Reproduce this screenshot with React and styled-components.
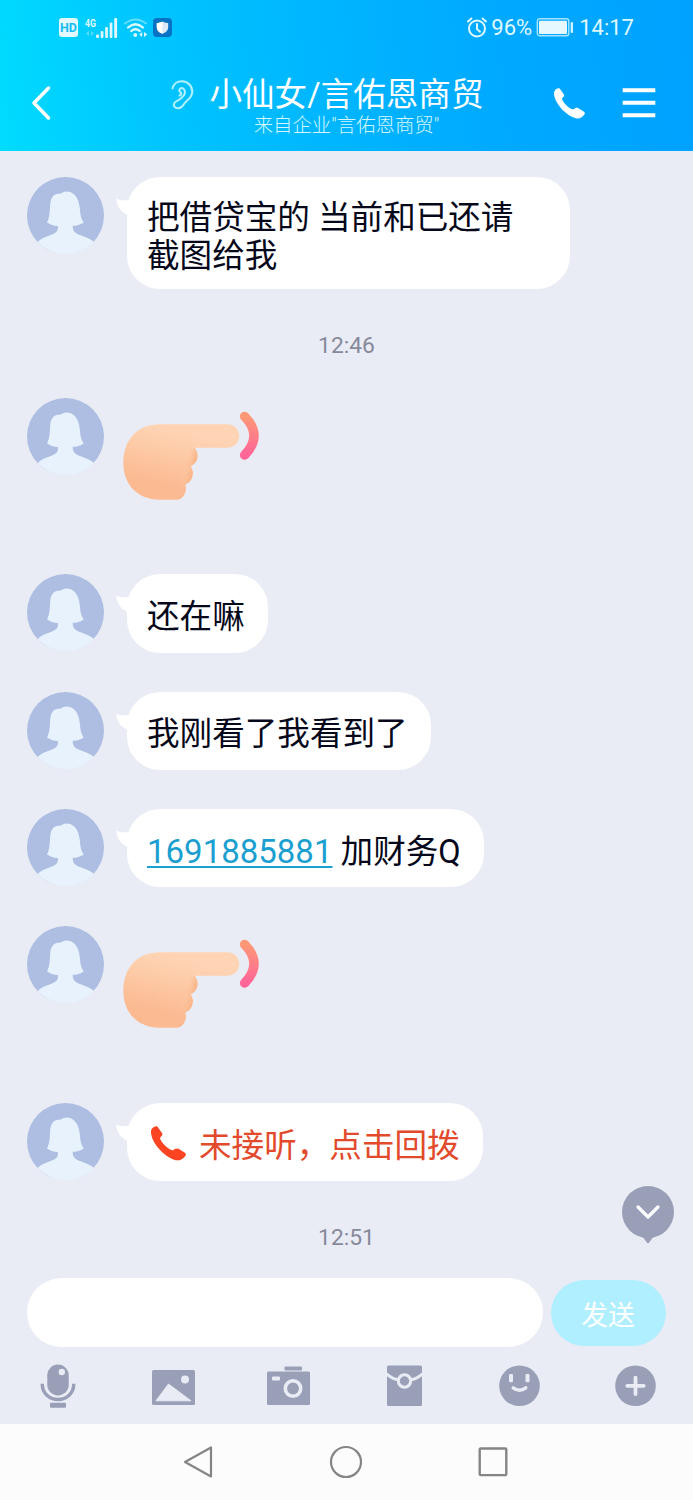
import React from "react";
import styled, { createGlobalStyle } from "styled-components";

const GlobalStyle = createGlobalStyle`
  * { box-sizing: border-box; }
  body {
    margin: 0;
    background: #e9ecf5;
    font-family: Roboto, "Noto Sans CJK SC", sans-serif;
  }
  svg { display: block; flex: none; }
`;

const Screen = styled.div`
  width: 693px;
  height: 1500px;
  display: flex;
  flex-direction: column;
  overflow: hidden;
  background: #e9ecf5;
`;

const Header = styled.header`
  height: 151px;
  flex: none;
  color: #fff;
  background: linear-gradient(84deg, #00dcff 0%, #00d4ff 7%, #00c4ff 24%, #00b5ff 48%, #00a8ff 75%, #00a2ff 100%);
`;

const StatusBar = styled.div`
  height: 55px;
  padding: 0 59px;
  display: flex;
  align-items: center;
  justify-content: space-between;
  color: #dff8ff;
`;

const StatusGroup = styled.div`
  display: flex;
  align-items: center;
  gap: ${(p) => p.$gap}px;
`;

const HdBadge = styled.span`
  width: 19px;
  height: 19px;
  margin-right: 1px;
  border-radius: 3px;
  background: #e2f9ff;
  color: #12bdf3;
  font-size: 12.5px;
  font-weight: 700;
  line-height: 19px;
  text-align: center;
`;

const StatusText = styled.span`
  font-size: 22px;
  line-height: 26px;
  margin-left: ${(p) => p.$left || 0}px;
`;

const TitleBar = styled.div`
  height: 96px;
  padding: 0 37px 0 31px;
  display: grid;
  grid-template-columns: 100px 1fr 102px;
  align-items: center;
`;

const TitleBlock = styled.div`
  display: flex;
  flex-direction: column;
  align-items: center;
  padding-top: 7px;
`;

const Title = styled.h1`
  margin: 0 30px 0 0;
  display: flex;
  align-items: center;
  gap: 15px;
  font-size: 32.6px;
  font-weight: 400;
  line-height: 38px;
  white-space: nowrap;
`;

const Subtitle = styled.div`
  margin-left: 8px;
  font-size: 19.4px;
  font-weight: 300;
  line-height: 24px;
  white-space: nowrap;
  color: #d5f6ff;
`;

const HeaderActions = styled.div`
  display: flex;
  align-items: center;
  justify-content: space-between;
`;

const Conversation = styled.main`
  position: relative;
  height: 1116px;
  flex: none;
  padding: 26px 27px 0;
  display: flex;
  flex-direction: column;
  gap: 39px;
`;

const MessageRow = styled.div`
  display: flex;
  align-items: flex-start;
  flex: none;
  gap: ${(p) => (p.$sticker ? 16 : 23)}px;
  height: ${(p) => (p.$sticker ? "137.8px" : "auto")};
`;

const Bubble = styled.div`
  position: relative;
  min-height: 78.3px;
  width: ${(p) => (p.$width ? `${p.$width}px` : "auto")};
  padding: ${(p) => (p.$multiline ? "22px 40px 14px 20px" : "23.3px 23px 16.7px 20px")};
  display: flex;
  align-items: center;
  border-radius: 33px;
  background: #fff;
  color: ${(p) => (p.$alert ? "#e24a2b" : "#05081a")};
  font-size: 32.6px;
  line-height: 38px;
`;

const MissedIcon = styled.span`
  margin: -5px 13px 0 4px;
`;

const Tail = styled.svg`
  position: absolute;
  left: -11.5px;
  top: 21px;
`;

const QqLink = styled.span`
  color: #1a9fd0;
  font-size: 33px;
  text-decoration: underline;
  text-decoration-thickness: 2px;
  text-underline-offset: 3px;
`;

const TimeStamp = styled.time`
  height: 30.7px;
  flex: none;
  padding-top: 2.5px;
  font-size: 22.8px;
  line-height: 29px;
  text-align: center;
  color: #86899a;
`;

const JumpDown = styled.div`
  position: absolute;
  right: 19px;
  top: 1035px;
`;

const Composer = styled.div`
  height: 80px;
  flex: none;
  padding: 11px 27px 0;
  display: flex;
  align-items: flex-start;
  gap: 8px;
`;

const InputField = styled.div`
  width: 516px;
  height: 69px;
  border-radius: 35px;
  background: #fff;
`;

const SendButton = styled.button`
  width: 115px;
  height: 66px;
  margin: 2px 0 0;
  padding: 0 1px 0 0;
  border: 0;
  border-radius: 33px;
  background: #b0efff;
  color: #fff;
  font-family: inherit;
  font-size: 26.8px;
`;

const ToolRow = styled.div`
  height: 77px;
  flex: none;
  display: grid;
  grid-template-columns: repeat(6, 1fr);
  justify-items: center;
  align-items: center;
`;

const NavBar = styled.nav`
  height: 76px;
  flex: none;
  padding-right: 1px;
  display: flex;
  justify-content: center;
  align-items: center;
  gap: 113px;
  background: #fcfcfc;
`;

const Handset = ({ size, color }) => (
  <svg width={size} height={size} viewBox="0 0 32 32">
    <path
      fill={color}
      d="M0 5.5C0 2.5 2 .6 4.6 .2C5.8 .1 6.3 .8 6.8 1.8L10.3 6.8C10.8 7.8 10.2 8.8 9.5 9.4C8.6 10.2 8 11 8.5 12C10 15.5 15 20.5 19 22C20.2 22.5 20.8 21.8 21.6 21C22.6 20.2 24 20.4 25.2 20.9L31 24.5C32.2 25.4 32 26.6 31.2 27.6C29 30.6 25.8 32 22.5 31.2C12 28.5 0 15 0 5.5Z"
    />
  </svg>
);

const Signal = () => (
  <svg width="33" height="22" viewBox="0 0 33 22" fill="#dff8ff">
    <text x="0" y="9.5" fontSize="11.5" fontWeight="700" textLength="11" lengthAdjust="spacingAndGlyphs">4G</text>
    <path d="M4 14v5L1 16.5zM6 14v5l3-2.5z" opacity=".4" />
    <rect x="11" y="17.5" width="3" height="3.5" rx="1" />
    <rect x="15.7" y="14" width="2.7" height="7" rx="1" />
    <rect x="20.2" y="10" width="2.7" height="11" rx="1" />
    <rect x="24.7" y="5.5" width="2.7" height="15.5" rx="1" />
    <rect x="29.2" y="1" width="2.9" height="20" rx="1" />
  </svg>
);

const Wifi = () => (
  <svg width="24" height="20" viewBox="0 0 24 20" fill="none" stroke="#dff8ff" strokeWidth="2" strokeLinecap="round">
    <path d="M1 5.5Q11.5 -2.5 22 5.5" opacity=".45" />
    <path d="M4 9.5Q11.5 3 19 9.5M7.3 13Q11.5 9.4 15.7 13" strokeWidth="2.3" />
    <circle cx="11.3" cy="17" r="1.9" fill="#dff8ff" stroke="none" />
    <path d="M18.2 14v5l-3-2.5zM20 14v5l3.3-2.5z" fill="#dff8ff" stroke="none" />
  </svg>
);

const ShieldBadge = () => (
  <svg width="19" height="19" viewBox="0 0 19 19">
    <rect width="19" height="19" rx="4" fill="#0873c4" />
    <path d="M9.5 3.5C11.5 4.6 13 4.9 15.2 5V9.5C15.2 12.5 13 14.5 9.5 15.8C6 14.5 3.8 12.5 3.8 9.5V5C6 4.9 7.5 4.6 9.5 3.5Z" fill="#d9e9f5" />
    <path d="M9.5 3.5V15.8C6 14.5 3.8 12.5 3.8 9.5V5C6 4.9 7.5 4.6 9.5 3.5Z" fill="#fff" />
  </svg>
);

const Alarm = () => (
  <svg width="20" height="21" viewBox="0 0 20 21" fill="none" stroke="#dff8ff" strokeWidth="2" strokeLinecap="round">
    <circle cx="10" cy="11.5" r="8" />
    <path d="M10 7v5l3 2.7M1 4.4L4.4 1.5M19 4.4L15.6 1.5" />
  </svg>
);

const Battery = () => (
  <svg width="38" height="19" viewBox="0 0 38 19">
    <rect x="1.3" y=".8" width="31.5" height="17" rx="2.5" fill="none" stroke="#a5e5ff" strokeWidth="1.4" />
    <rect x="3" y="2.7" width="28" height="13.3" rx="1" fill="#e6f8ff" />
    <rect x="34.7" y="4" width="2.3" height="11" rx="1" fill="#d2f3ff" />
  </svg>
);

const Ear = () => (
  <svg width="23" height="30" viewBox="0 0 23 30" fill="none" stroke="#b4f1ff" strokeWidth="2" strokeLinecap="round">
    <path d="M1.5 8.5C2.5 4 6.5 1.2 11 1.3C17 1.4 21.5 6 21.3 12C21.1 17.4 16.5 19.8 14.3 22.3C12 25 11.5 28.3 7.3 28.3C3.6 28.3 2 25.7 3.2 23.2C4.5 20.5 8.5 20.4 10.8 17.7" />
    <path d="M8.3 10.4C8.2 8 11 7.4 12.6 8.9C14.8 11.2 14.3 15.4 10.7 17.5M8.3 10.4C8.3 12 10.3 11.7 10.3 13.5C10.3 14.8 9.3 15.2 8.6 15.5" />
  </svg>
);

const Avatar = () => (
  <svg width="77" height="77" viewBox="0 0 77 77">
    <circle cx="38.5" cy="38.5" r="38.5" fill="#adbee2" />
    <path
      fill="#e8f2fd"
      d="M10.5 65C14 61.5 20 59.5 25 57.6C29 56 31 54 31 50.8L30.7 49C26.5 48.6 23 47.4 20 45.4C23 40 22.8 33 23.2 27C23.7 20 27.5 16.2 32 16.7C33.5 16.9 34.3 16.4 35.4 15.6C39 13.8 43 14.4 46 16.5C51 20 52.5 27 53 33C53.3 38 54.2 42 56.7 45.4C53.5 47.5 49.5 48.8 45.8 48.8C45.3 53 47.6 55.8 51.5 57.4C57 59.5 63.5 61.5 67 65A38.5 38.5 0 0 1 10.5 65Z"
    />
  </svg>
);

const PokeSticker = ({ id }) => (
  <svg width="145" height="110" viewBox="0 0 145 110">
    <defs>
      <linearGradient id={`${id}-skin`} x1=".6" y1="0" x2=".25" y2="1">
        <stop offset=".12" stopColor="#fed4b5" />
        <stop offset=".4" stopColor="#fdcaa6" />
        <stop offset=".8" stopColor="#fbba91" />
      </linearGradient>
      <linearGradient id={`${id}-knuckle`} x1="0" y1="0" x2="1" y2=".3">
        <stop offset=".5" stopColor="#fdc8a4" stopOpacity="0" />
        <stop offset="1" stopColor="#fab68a" />
      </linearGradient>
      <linearGradient id={`${id}-arc`} x1="0" y1="0" x2="0" y2="1">
        <stop offset="0" stopColor="#ff9876" />
        <stop offset="1" stopColor="#ff6597" />
      </linearGradient>
    </defs>
    <path
      fill={`url(#${id}-skin)`}
      d="M40 26.2H107.5A11.8 11.8 0 0 1 107.5 49.8H74.500C79.500 55 78.300 65.500 70.500 68.200C74.500 73.500 73.300 83.500 65.300 86.400C67.500 92.500 64 101.700 56.500 101.700H40C17 101.700 3.300 86 3.300 65C3.300 42 17 26.200 40 26.200Z"
    />
    <path fill={`url(#${id}-knuckle)`} d="M58 49.800H74.500C79.500 55 78.300 65.500 70.500 68.200C65 68 60 62 58 49.800Z" />
    <path fill={`url(#${id}-knuckle)`} d="M54 68H70.500C74.500 73.500 73.300 83.500 65.300 86.400C60 85 56 78 54 68Z" />
    <path d="M124.700 18.500Q143.200 37.500 124.700 57" fill="none" stroke={`url(#${id}-arc)`} strokeWidth="9.600" strokeLinecap="round" />
  </svg>
);

const TextMessage = ({ children, ...bubble }) => (
  <MessageRow>
    <Avatar />
    <Bubble {...bubble}>
      <Tail width="22" height="18" viewBox="0 0 22 18">
        <path fill="#fff" d="M.3 .3C3 2.500 8 3 14 1.500H22V18H14C6 15.500 .3 9 .3 .3Z" />
      </Tail>
      {children}
    </Bubble>
  </MessageRow>
);

const StickerMessage = ({ id }) => (
  <MessageRow $sticker>
    <Avatar />
    <PokeSticker id={id} />
  </MessageRow>
);

const TOOL = "#999fb6";
const PAPER = "#e9ecf5";

const toolIcons = [
  <svg key="mic" width="36" height="44" viewBox="0 0 36 44">
    <rect x="7.300" y=".5" width="21.400" height="31" rx="10.700" fill={TOOL} />
    <circle cx="21.800" cy="8" r="3.200" fill={PAPER} />
    <path d="M2.300 19.800v1a15.700 14.700 0 0 0 31.400 0v-1" fill="none" stroke={TOOL} strokeWidth="3.400" />
    <rect x="10" y="38.800" width="16" height="5" rx="1" fill={TOOL} />
  </svg>,
  <svg key="image" width="43" height="44" viewBox="0 0 43 44">
    <rect y="6" width="43" height="35" rx="1.500" fill={TOOL} />
    <circle cx="33" cy="15.500" r="4" fill={PAPER} />
    <path d="M4 36.800L16.500 20L39 36.800Z" fill={PAPER} stroke={PAPER} strokeLinejoin="round" />
  </svg>,
  <svg key="camera" width="43" height="44" viewBox="0 0 43 44">
    <rect y="7.500" width="43" height="33.500" rx="1.500" fill={TOOL} />
    <rect x="17.500" y="2.500" width="17.500" height="4" rx="1" fill={TOOL} />
    <rect x="5" y="12.500" width="8" height="4" rx="1" fill={PAPER} />
    <circle cx="26" cy="24.500" r="7.700" fill="none" stroke={PAPER} strokeWidth="3.600" />
  </svg>,
  <svg key="packet" width="35" height="44" viewBox="0 0 35 44">
    <rect y="1.500" width="35" height="40.500" rx="1.500" fill={TOOL} />
    <path d="M-1 9.500Q6.500 15.500 11 15.500M36 9.500Q28.500 15.500 24 15.500" fill="none" stroke={PAPER} strokeWidth="3" />
    <circle cx="17.500" cy="17" r="6.200" fill={TOOL} stroke={PAPER} strokeWidth="3" />
  </svg>,
  <svg key="smile" width="41" height="44" viewBox="0 0 41 44">
    <circle cx="20.500" cy="21.800" r="20.300" fill={TOOL} />
    <rect x="10" y="10" width="4" height="8.300" rx="1.200" fill={PAPER} />
    <rect x="26.500" y="10" width="4" height="8.300" rx="1.200" fill={PAPER} />
    <path d="M14.200 23.800Q20.500 28.600 26.800 23.800" fill="none" stroke={PAPER} strokeWidth="3.400" strokeLinecap="round" />
  </svg>,
  <svg key="plus" width="41" height="44" viewBox="0 0 41 44">
    <circle cx="20.500" cy="21.800" r="20.300" fill={TOOL} />
    <path d="M12.300 21.800h16.400M20.500 13.600V30" stroke={PAPER} strokeWidth="3.800" strokeLinecap="round" />
  </svg>,
];

export default function App() {
  return (
    <Screen>
      <GlobalStyle />
      <Header>
        <StatusBar>
          <StatusGroup $gap={5.8}>
            <HdBadge>HD</HdBadge>
            <Signal />
            <Wifi />
            <ShieldBadge />
          </StatusGroup>
          <StatusGroup $gap={4}>
            <Alarm />
            <StatusText>96%</StatusText>
            <Battery />
            <StatusText $left={1}>14:17</StatusText>
          </StatusGroup>
        </StatusBar>
        <TitleBar>
          <svg width="21" height="36" viewBox="0 0 21 36">
            <path d="M17.500 3L3 18L17.500 33" fill="none" stroke="#fff" strokeWidth="3.500" strokeLinecap="round" strokeLinejoin="round" />
          </svg>
          <TitleBlock>
            <Title>
              <Ear />
              小仙女/言佑恩商贸
            </Title>
            <Subtitle>来自企业"言佑恩商贸"</Subtitle>
          </TitleBlock>
          <HeaderActions>
            <Handset size={31} color="#fff" />
            <svg width="34" height="32" viewBox="0 0 34 32">
              <path d="M.7 3.200h32.600M.7 15.800h32.600M.7 28.300h32.600" stroke="#fff" strokeWidth="4" />
            </svg>
          </HeaderActions>
        </TitleBar>
      </Header>

      <Conversation>
        <TextMessage $multiline $width={443}>
          <span>把借贷宝的 当前和已还请截图给我</span>
        </TextMessage>
        <TimeStamp>12:46</TimeStamp>
        <StickerMessage id="poke-a" />
        <TextMessage>还在嘛</TextMessage>
        <TextMessage>我刚看了我看到了</TextMessage>
        <TextMessage>
          <span>
            <QqLink>1691885881</QqLink> 加财务Q
          </span>
        </TextMessage>
        <StickerMessage id="poke-b" />
        <TextMessage $alert>
          <MissedIcon>
            <Handset size={35} color="#fc4423" />
          </MissedIcon>
          未接听，点击回拨
        </TextMessage>
        <TimeStamp>12:51</TimeStamp>
        <JumpDown>
          <svg width="52" height="58" viewBox="0 0 52 58">
            <circle cx="26" cy="26" r="26" fill={TOOL} />
            <path d="M19 50Q22 51.500 24.500 56Q26 58.500 27.500 56Q30 51.500 33 50Z" fill={TOOL} />
            <path d="M16 21L26 31L36 21" fill="none" stroke="#fff" strokeWidth="3.200" strokeLinecap="round" strokeLinejoin="round" />
          </svg>
        </JumpDown>
      </Conversation>

      <Composer>
        <InputField />
        <SendButton>发送</SendButton>
      </Composer>
      <ToolRow>{toolIcons}</ToolRow>

      <NavBar>
        <svg width="34" height="34" viewBox="0 0 34 34" fill="none" stroke="#858585" strokeWidth="2.200" strokeLinejoin="round">
          <path d="M29 2.500V31.500L3 17Z" />
        </svg>
        <svg width="34" height="34" viewBox="0 0 34 34" fill="none" stroke="#858585" strokeWidth="2.200">
          <circle cx="17" cy="17" r="15" />
        </svg>
        <svg width="34" height="34" viewBox="0 0 34 34" fill="none" stroke="#858585" strokeWidth="2.400">
          <rect x="3.700" y="3.500" width="26.600" height="26.600" rx="1" />
        </svg>
      </NavBar>
    </Screen>
  );
}
